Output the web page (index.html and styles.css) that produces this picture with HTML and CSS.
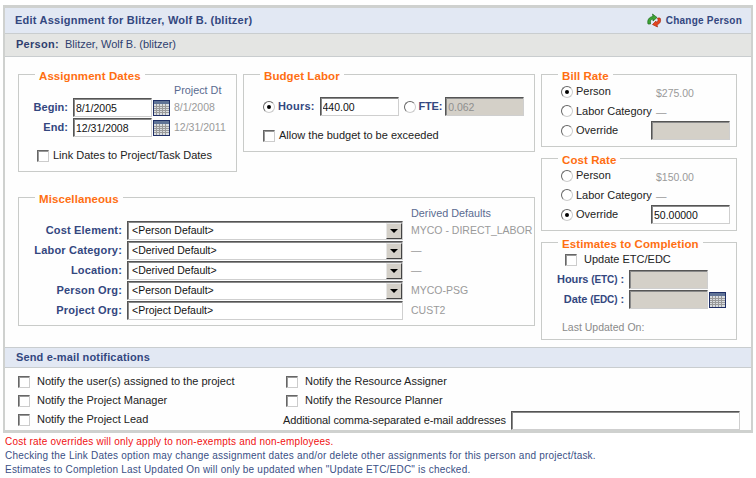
FILE: index.html
```html
<!DOCTYPE html>
<html lang="en">
<head>
<meta charset="utf-8">
<title>Edit Assignment</title>
<link rel="stylesheet" href="styles.css">
</head>
<body>
<div class="frame">
  <header class="titlebar">
    <h1 class="title">Edit Assignment for Blitzer, Wolf B. (blitzer)</h1>
    <a class="change">
      <svg class="change-icon" width="16" height="16" viewBox="0 0 16 16">
        <path d="M2 12C1 8 3 5 7 4.500L6.500 2L11 5.500L7 9L7 7C5 7 4 8.500 4.500 12Z" fill="#3fa535" stroke="#1d6b1d" stroke-width=".7"/>
        <path d="M14 6C15.500 9 14 12 11 12.500L11.500 15L6.500 12.500L10 9L10.500 10.500C12 10 12.500 8 11.500 6Z" fill="#e8451f" stroke="#a82c10" stroke-width=".7"/>
      </svg>
      Change Person
    </a>
  </header>
  <div class="personbar"><b>Person:</b><span>Blitzer, Wolf B. (blitzer)</span></div>

  <main class="content">
    <div class="col-left">
      <div class="row-top">
        <fieldset class="box box-dates">
          <legend>Assignment Dates</legend>
          <div class="dates">
            <span></span><span></span><span></span><span class="dt-head">Project Dt</span>
            <label class="lbl">Begin:</label><input class="txt" value="8/1/2005">
            <svg class="cal"><use href="#cal"/></svg><span class="muted">8/1/2008</span>
            <label class="lbl">End:</label><input class="txt" value="12/31/2008">
            <svg class="cal"><use href="#cal"/></svg><span class="muted">12/31/2011</span>
          </div>
          <label class="check link-dates"><input type="checkbox">Link Dates to Project/Task Dates</label>
        </fieldset>
        <fieldset class="box box-budget">
          <legend>Budget Labor</legend>
          <div class="budget">
            <input type="radio" name="b" checked><label class="lbl">Hours:</label>
            <input class="txt" value="440.00">
            <input class="radio-fte" type="radio" name="b"><label class="lbl lbl-fte">FTE:</label>
            <input class="txt off" value="0.062" disabled>
          </div>
          <label class="check allow"><input type="checkbox">Allow the budget to be exceeded</label>
        </fieldset>
      </div>
      <fieldset class="box box-misc">
        <legend>Miscellaneous</legend>
        <div class="misc">
          <span></span><span></span><span class="dt-head">Derived Defaults</span>
          <label class="lbl">Cost Element:</label>
          <div class="sel">&lt;Person Default&gt;<i class="arrow"></i></div>
          <span class="muted">MYCO - DIRECT_LABOR</span>
          <label class="lbl">Labor Category:</label>
          <div class="sel">&lt;Derived Default&gt;<i class="arrow"></i></div>
          <span class="muted">—</span>
          <label class="lbl">Location:</label>
          <div class="sel">&lt;Derived Default&gt;<i class="arrow"></i></div>
          <span class="muted">—</span>
          <label class="lbl">Person Org:</label>
          <div class="sel">&lt;Person Default&gt;<i class="arrow"></i></div>
          <span class="muted">MYCO-PSG</span>
          <label class="lbl">Project Org:</label>
          <div class="sel sel-plain">&lt;Project Default&gt;</div>
          <span class="muted">CUST2</span>
        </div>
      </fieldset>
    </div>

    <div class="col-right">
      <fieldset class="box box-rate">
        <legend>Bill Rate</legend>
        <div class="rate">
          <input type="radio" name="r1" checked><span class="opt">Person</span><span class="muted val">$275.00</span>
          <input type="radio" name="r1"><span class="opt">Labor Category</span><span class="muted val">—</span>
          <input type="radio" name="r1"><span class="opt">Override</span><input class="txt off rate-in" disabled>
        </div>
      </fieldset>
      <fieldset class="box box-rate">
        <legend>Cost Rate</legend>
        <div class="rate">
          <input type="radio" name="r2"><span class="opt">Person</span><span class="muted val">$150.00</span>
          <input type="radio" name="r2"><span class="opt">Labor Category</span><span class="muted val">—</span>
          <input type="radio" name="r2" checked><span class="opt">Override</span><input class="txt rate-in" value="50.00000">
        </div>
      </fieldset>
      <fieldset class="box box-etc">
        <legend>Estimates to Completion</legend>
        <label class="check update"><input type="checkbox">Update ETC/EDC</label>
        <div class="etc">
          <label class="lbl">Hours <small>(ETC)</small> :</label><input class="txt off" disabled><span></span>
          <label class="lbl">Date <small>(EDC)</small> :</label><input class="txt off" disabled><svg class="cal"><use href="#cal"/></svg>
        </div>
        <div class="last">Last Updated On:</div>
      </fieldset>
    </div>
  </main>

  <h2 class="mailbar">Send e-mail notifications</h2>
  <section class="mail">
    <label class="check"><input type="checkbox">Notify the user(s) assigned to the project</label>
    <label class="check"><input type="checkbox">Notify the Resource Assigner</label>
    <label class="check"><input type="checkbox">Notify the Project Manager</label>
    <label class="check"><input type="checkbox">Notify the Resource Planner</label>
    <label class="check"><input type="checkbox">Notify the Project Lead</label>
    <div class="additional"><label>Additional comma-separated e-mail addresses</label><input class="txt"></div>
  </section>
</div>
<footer class="notes">
  <p class="warn">Cost rate overrides will only apply to non-exempts and non-employees.</p>
  <p>Checking the Link Dates option may change assignment dates and/or delete other assignments for this person and project/task.</p>
  <p>Estimates to Completion Last Updated On will only be updated when "Update ETC/EDC" is checked.</p>
</footer>
<svg class="defs" width="0" height="0">
  <symbol id="cal" viewBox="0 0 17 16">
    <rect x="0" y="0" width="17" height="16" fill="#1f2f66"/>
    <rect x="1" y="1" width="15" height="14" fill="#d9dde0"/>
    <rect x="1" y="1" width="15" height="3" fill="#5f7396"/>
    <path d="M1 6.500H16M1 8.500H16M1 10.500H16M1 12.500H16M3.500 4V15M6.500 4V15M9.500 4V15M12.500 4V15" stroke="#9a9a9a" stroke-width="1"/>
  </symbol>
</svg>
</body>
</html>
```
FILE: styles.css
```css
* { box-sizing: border-box; }
html, body { margin: 0; padding: 0; background: #fff; }
body { font: 11px/13px "Liberation Sans", Arial, sans-serif; color: #222; }

.frame { width: 750px; margin: 5px 0 0 3px; border: solid #cfd1cf; border-width: 3px 2px; background: #fefefe; }

.titlebar { height: 26px; display: flex; align-items: center; justify-content: space-between; padding: 0 9px 1px 10px; background: #e2e8f3; border-bottom: 1px solid #c9cdcf; }
.title { margin: 0; font-size: 11px; font-weight: bold; color: #33477f; letter-spacing: .23px; }
.change { display: flex; align-items: center; gap: 4px; font-weight: bold; font-size: 10px; color: #33477f; letter-spacing: .22px; }
.change-icon { display: block; }

.personbar { height: 23px; display: flex; align-items: center; gap: 6px; padding: 0 0 1px 11px; background: #e4e5e3; border-bottom: 1px solid #c9cdcf; color: #2f3f6f; }
.personbar b { font-weight: bold; letter-spacing: .28px; }

.content { height: 290px; display: flex; gap: 6px; padding: 8px 0 0 13px; }
.col-left { width: 517px; }
.col-right { width: 196px; display: flex; flex-direction: column; gap: 2px; }
.row-top { display: flex; gap: 6px; align-items: flex-start; }

.box { margin: 0; padding: 0; border: 1px solid #c9cbc9; min-width: 0; }
.box legend { margin-left: 16px; padding: 4px 4px 0; font-size: 11.500px; line-height: 14px; color: #ff6f12; font-weight: bold; letter-spacing: .08px; }

.box-dates { width: 219px; height: 107px; }
.box-budget { width: 292px; height: 87px; }
.box-misc { width: 517px; height: 138px; margin-top: 16px; }
.box-rate { height: 82px; }
.box-etc { height: 107px; }

.lbl { text-align: right; font-weight: bold; color: #33477f; white-space: nowrap; letter-spacing: .18px; }
.lbl small { font-size: 10px; }
.muted { color: #9a9a9a; white-space: nowrap; font-size: 10.500px; }
.dt-head { color: #5a6b90; white-space: nowrap; font-size: 10.800px; }

.txt { width: 79px; height: 19px; padding: 1px 2px 0; margin: 0; font: 10.500px "Liberation Sans", Arial, sans-serif; color: #111; background: #fff; border: 1px solid; border-color: #555 #cfcfcf #cfcfcf #555; box-shadow: inset 1px 1px 0 #8a8a8a; border-radius: 0; outline: 0; }
.txt.off { background: #d4d0c8; color: #8f8f8f; }

input[type=checkbox], input[type=radio] { appearance: none; margin: 0; flex: none; background: #fff; }
input[type=checkbox] { width: 12px; height: 12px; border: 1px solid; border-color: #666 #ccc #ccc #666; box-shadow: inset 1px 1px 0 #999; }
input[type=radio] { width: 12px; height: 12px; border-radius: 50%; border: 1px solid; border-color: #666 #ccc #ccc #666; position: relative; }
input[type=radio]:checked::after { content: ""; position: absolute; left: 3px; top: 3px; width: 4px; height: 4px; border-radius: 50%; background: #000; }

.cal { width: 17px; height: 16px; display: block; }
.defs { position: absolute; }

.check { display: flex; align-items: center; gap: 4px; white-space: nowrap; color: #222; }

.dates { display: grid; grid-template-columns: 49px 84px 21px auto; align-items: center; row-gap: 1px; margin: 1px 0 0 0; }
.dates .lbl { letter-spacing: .05px; }
.dates .txt { margin-left: 5px; }
.dates .cal { margin-left: 1px; }
.dates span:nth-child(4), .dates .muted { margin-left: 1px; }
.link-dates { margin: 12px 0 0 18px; }

.budget { display: flex; align-items: center; margin: 14px 0 0 19px; }
.budget .lbl { margin: 0 5px 0 3px; }
.budget .lbl-fte { margin-right: 3px; letter-spacing: -.2px; }
.budget .radio-fte { margin-left: 5px; }
.allow { margin: 13px 0 0 19px; }

.misc { display: grid; grid-template-columns: 103px 289px auto; row-gap: 1px; align-items: center; margin-top: 1px; }
.misc .sel { margin-left: 5px; width: 276px; }
.sel { position: relative; height: 19px; line-height: 17px; padding-left: 4px; font-size: 10.500px; border: 1px solid; border-color: #555 #cfcfcf #cfcfcf #555; box-shadow: inset 1px 1px 0 #8a8a8a; background: #fff; color: #111; }
.arrow { position: absolute; right: 0; top: 1px; width: 16px; height: 16px; background: #d4d0c8; border: 1px solid; border-color: #e8e8e8 #444 #444 #e8e8e8; }
.arrow::after { content: ""; position: absolute; left: 3px; top: 5px; border: solid transparent; border-width: 4px 4px 0; border-top-color: #000; }

.rate { display: grid; grid-template-columns: 12px 77px auto; column-gap: 3px; align-items: center; margin: -1px 0 0 19px; grid-auto-rows: 19.500px; }
.opt { color: #222; white-space: nowrap; }
.val { margin-top: 3px; }
.rate-in { margin-left: -5px; }

.update { margin: 2px 0 0 23px; gap: 7px; }
.etc { display: grid; grid-template-columns: 82px 84px auto; align-items: center; row-gap: 1px; margin-top: 4px; }
.etc .lbl { letter-spacing: -.1px; }
.etc .txt { margin-left: 5px; }
.etc .cal { margin-left: 1px; }
.last { margin: 12px 0 0 20px; color: #8a8a8a; font-size: 10.500px; }

.mailbar { height: 21px; margin: 0; padding: 0 0 1px 11px; display: flex; align-items: center; font-size: 11px; font-weight: bold; color: #33477f; background: #e2e8f3; border-top: 1px solid #c9cdcf; border-bottom: 1px solid #c9cdcf; letter-spacing: .15px; }
.mail { height: 62px; display: grid; grid-template-columns: 268px auto; grid-auto-rows: 19px; align-items: center; padding: 4px 0 0 13px; }
.mail .check { gap: 7px; }
.additional { display: flex; align-items: center; gap: 5px; margin: 1px 0 0 -3px; letter-spacing: -.09px; }
.additional .txt { width: 229px; }

.notes { padding: 2px 0 0 5px; font-size: 10px; letter-spacing: .21px; color: #3a4f85; }
.notes p { margin: 0; line-height: 14px; }
.notes .warn { color: #f01010; }
```
